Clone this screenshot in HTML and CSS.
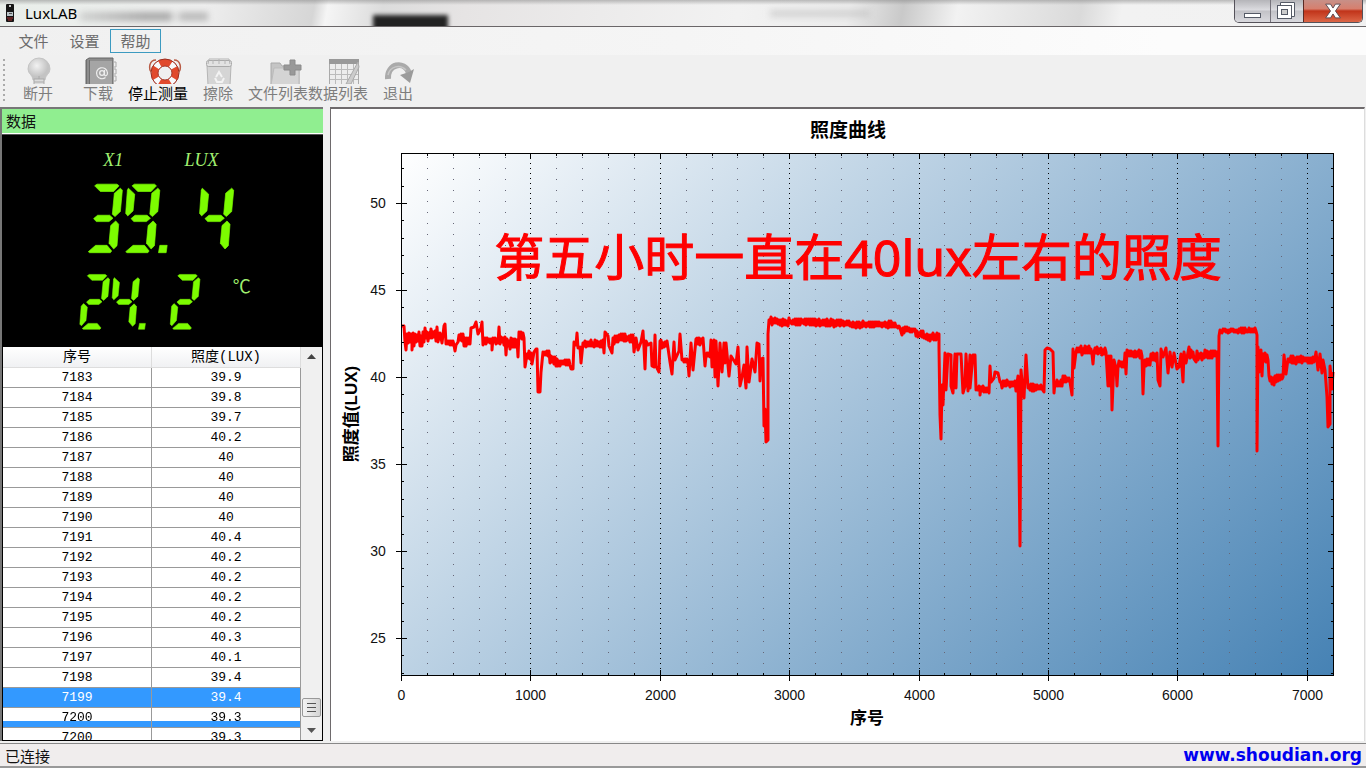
FILE: index.html
```html
<!DOCTYPE html>
<html lang="zh-CN">
<head>
<meta charset="utf-8">
<title>LuxLAB</title>
<link rel="stylesheet" href="styles.css">
</head>
<body>
<header class="titlebar">
  <svg class="app-icon" viewBox="0 0 10 20" aria-hidden="true">
    <rect x="1" y="1" width="8" height="18" rx="1" fill="#161616"/><rect x="4" y="2" width="2" height="2" fill="#c8c8c8"/>
    <rect x="2" y="9" width="6" height="4" fill="#b9c4c8"/><rect x="4" y="10" width="3" height="1" fill="#555"/><path d="M2 15h6M3 17h4" stroke="#a33" stroke-width="1"/>
  </svg>
  <h1 class="app-name">LuxLAB</h1>
  <div class="glass-blot glass-text"></div>
  <div class="glass-blot glass-dark"></div>
  <div class="glass-blot glass-grey"></div>
  <div class="window-buttons">
    <button class="win-btn win-min" aria-label="最小化"><svg viewBox="0 0 35 22"><rect x="9.500" y="13.500" width="16" height="4" fill="#fff" stroke="#555a66"/></svg></button>
    <button class="win-btn win-max" aria-label="还原"><svg viewBox="0 0 32 22"><path d="M9.500 5.500V2.500H23.500V16.500H20.500" fill="#fff" stroke="#555a66"/><rect x="6.500" y="5.500" width="14" height="13" fill="#fff" stroke="#555a66"/><rect x="10.500" y="9.500" width="6" height="5" fill="#ccc" stroke="#555a66"/></svg></button>
    <button class="win-btn win-close" aria-label="关闭"><svg viewBox="0 0 59 22"><path d="M22 4h5l2.500 4 2.500-4h5l-5 7 5 7h-5l-2.500-4-2.500 4h-5l5-7z" fill="#fff" stroke="#5c4a52"/></svg></button>
  </div>
</header>

<nav class="menubar">
  <button class="menu-item">文件</button>
  <button class="menu-item">设置</button>
  <button class="menu-item menu-active">帮助</button>
</nav>

<div class="toolbar" role="toolbar">
  <div class="grip"></div>
  <button class="tool" disabled>
    <svg viewBox="0 0 60 29"><defs><radialGradient id="bulb" cx=".4" cy=".35"><stop offset="0" stop-color="#f2f2f2"/><stop offset="1" stop-color="#c3c3c3"/></radialGradient></defs>
      <path d="M20 14a11 11 0 1 1 22 0c0 5-5 6-5 11H25c0-5-5-6-5-11z" fill="url(#bulb)" stroke="#c4c4c4"/><rect x="26" y="24" width="10" height="7" fill="#dcdcdc" stroke="#aaa"/><path d="M26 27h10M31 21v3" stroke="#aaa"/></svg>
    <span>断开</span></button>
  <button class="tool" disabled>
    <svg viewBox="0 0 60 29"><path d="M18 5l3-2h24v27H18z" fill="#8d8d8d" stroke="#666"/><path d="M22 6h22v24H22z" fill="#a5a5a5"/><path d="M18.500 5v25M21.500 5v25" stroke="#6f6f6f"/><path d="M46 7h2v5h-2M46 14h2v5h-2M46 21h2v5h-2" fill="none" stroke="#aaa"/><circle cx="34" cy="18" r="2.300" fill="none" stroke="#eee" stroke-width="1.300"/><path d="M36.500 15v4c0 3 3 2 3-1a5.500 5.500 0 1 0-2 4.500" fill="none" stroke="#eee" stroke-width="1.200"/></svg>
    <span>下载</span></button>
  <button class="tool">
    <svg viewBox="0 0 60 29"><circle cx="37" cy="18" r="10.500" fill="none" stroke="#e1492c" stroke-width="7"/><circle cx="37" cy="18" r="10.500" fill="none" stroke="#f7f9fb" stroke-width="7" stroke-dasharray="5 11.490" stroke-dashoffset="-5.700"/><circle cx="37" cy="18" r="14" fill="none" stroke="#9b2d20"/><circle cx="37" cy="18" r="7" fill="none" stroke="#a43a2b"/><path d="M28 5c-7 0-8 9-4 13M46 5c7 0 8 9 4 13" fill="none" stroke="#b85a44" stroke-width="1.500"/></svg>
    <span>停止测量</span></button>
  <button class="tool" disabled>
    <svg viewBox="0 0 60 29"><path d="M19 11h24l-1 19H20z" fill="#d5d5d5" stroke="#b5b5b5"/><rect x="18.500" y="5.500" width="25" height="6" rx="2" fill="#e2e2e2" stroke="#aaa"/><path d="M20 9l1-5h20l1 5M25 5v4M31 4v5M37 5v4" fill="none" stroke="#b4b4b4"/><path d="M28 22l3-5 3 5M27 23l2 4h5l2-4" fill="none" stroke="#f3f3f3" stroke-width="2"/></svg>
    <span>擦除</span></button>
  <button class="tool" disabled>
    <svg viewBox="0 0 60 29"><path d="M23 8h9l2 3h17v19H23z" fill="#c5c5c5" stroke="#aaa"/><path d="M26 13h25v17H23z" fill="#d4d4d4" stroke="#bbb"/><path d="M42 5h5v5h6v5h-6v5h-5v-5h-6v-5h6z" fill="#999" stroke="#8b8b8b"/></svg>
    <span>文件列表</span></button>
  <button class="tool" disabled>
    <svg viewBox="0 0 60 29"><rect x="21.500" y="4.500" width="29" height="26" fill="#ededed" stroke="#aaa"/><path d="M21 4h30v5H21z" fill="#999"/><path d="M22 14.500h28M22 19.500h28M22 24.500h28M27.500 9v20M33.500 9v20M39.500 9v20M45.500 9v20" stroke="#bbb"/><path d="M50 7L38 29h5L51 12z" fill="#ccc" stroke="#aaa"/></svg>
    <span>数据列表</span></button>
  <button class="tool" disabled>
    <svg viewBox="0 0 60 29"><path d="M20 24C19 9 36 5 41 18" fill="none" stroke="#aaa" stroke-width="6"/><path d="M32 20l10 8 4-14-5 3z" fill="#9b9b9b"/><path d="M20 20C22 11 32 9 38 15" fill="none" stroke="#c6c6c6" stroke-width="1.500"/></svg>
    <span>退出</span></button>
</div>

<main class="workspace">
  <aside class="side">
    <h2 class="side-title">数据</h2>
    <svg class="meter" viewBox="3 135 320 210" role="img" aria-label="39.4 LUX, 24.2 ℃">
      <defs>
        <path id="seg-a" d="M19 5l7-5h60l6 5-16 17H36z"/>
        <path id="seg-b" d="M96 12l6 6-6 64-16 15-8-7 6-63z"/>
        <path id="seg-c" d="M82 110l9 10-5 64-10 10-14-17 5-53z"/>
        <path id="seg-d" d="M0 202l22-19h34l14 17-4 5H4z"/>
        <path id="seg-e" d="M5 109l14 13-5 50-17 20-6-6 5-67z"/>
        <path id="seg-f" d="M8 12l19 18-5 50L6 95l-6-8 5-69z"/>
        <path id="seg-g" d="M16 103l12-10h36l10 9-12 10H24z"/>
        <path id="seg-dot" d="M102 183h22l-3 22H98z"/>
      </defs>
      <text class="meter-unit meter-italic" x="104" y="166">X1</text>
      <text class="meter-unit meter-italic" x="185" y="166">LUX</text>
      <text class="meter-unit" x="233" y="293">℃</text>
      <g fill="#7cfc00" stroke="#7cfc00" stroke-width="2">
        <g transform="translate(89 184) scale(.3333)">
          <g><use href="#seg-a"/><use href="#seg-b"/><use href="#seg-c"/><use href="#seg-d"/><use href="#seg-g"/></g>
          <g transform="translate(112)"><use href="#seg-a"/><use href="#seg-b"/><use href="#seg-c"/><use href="#seg-d"/><use href="#seg-f"/><use href="#seg-g"/><use href="#seg-dot"/></g>
          <g transform="translate(333)"><use href="#seg-b"/><use href="#seg-c"/><use href="#seg-f"/><use href="#seg-g"/></g>
        </g>
        <g transform="translate(83 274) scale(.2667)">
          <g><use href="#seg-a"/><use href="#seg-b"/><use href="#seg-g"/><use href="#seg-e"/><use href="#seg-d"/></g>
          <g transform="translate(112)"><use href="#seg-b"/><use href="#seg-c"/><use href="#seg-f"/><use href="#seg-g"/><use href="#seg-dot"/></g>
          <g transform="translate(338)"><use href="#seg-a"/><use href="#seg-b"/><use href="#seg-g"/><use href="#seg-e"/><use href="#seg-d"/></g>
        </g>
      </g>
    </svg>
    <div class="grid-box">
      <div class="grid-view">
        <table class="grid">
          <thead><tr><th scope="col">序号</th><th scope="col">照度(LUX)</th></tr></thead>
          <tbody>
            <tr><td>7183</td><td>39.9</td></tr>
            <tr><td>7184</td><td>39.8</td></tr>
            <tr><td>7185</td><td>39.7</td></tr>
            <tr><td>7186</td><td>40.2</td></tr>
            <tr><td>7187</td><td>40</td></tr>
            <tr><td>7188</td><td>40</td></tr>
            <tr><td>7189</td><td>40</td></tr>
            <tr><td>7190</td><td>40</td></tr>
            <tr><td>7191</td><td>40.4</td></tr>
            <tr><td>7192</td><td>40.2</td></tr>
            <tr><td>7193</td><td>40.2</td></tr>
            <tr><td>7194</td><td>40.2</td></tr>
            <tr><td>7195</td><td>40.2</td></tr>
            <tr><td>7196</td><td>40.3</td></tr>
            <tr><td>7197</td><td>40.1</td></tr>
            <tr><td>7198</td><td>39.4</td></tr>
            <tr class="row-selected"><td>7199</td><td>39.4</td></tr>
            <tr class="row-partial"><td><span>7200</span></td><td><span>39.3</span></td></tr>
            <tr><td>7200</td><td>39.3</td></tr>
          </tbody>
        </table>
      </div>
      <div class="scrollbar">
        <button class="scroll-btn" aria-label="向上滚动"><svg viewBox="0 0 9 5"><path d="M0 5l4.500-5L9 5z" fill="#444"/></svg></button>
        <div class="scroll-track"><div class="scroll-thumb"></div></div>
        <button class="scroll-btn" aria-label="向下滚动"><svg viewBox="0 0 9 5"><path d="M0 0l4.500 5L9 0z" fill="#555"/></svg></button>
      </div>
    </div>
  </aside>

  <section class="chart-panel">
    <svg class="chart" viewBox="331 109 1033 632" role="img" aria-label="照度曲线">
      <defs><linearGradient id="plot-fill" gradientUnits="userSpaceOnUse" x1="401" y1="153" x2="1128" y2="880"><stop offset="0" stop-color="#fff"/><stop offset="1" stop-color="#4682b4"/></linearGradient></defs>
      <text class="chart-title" x="848" y="137">照度曲线</text>
      <rect x="401.500" y="153.500" width="932" height="522" fill="url(#plot-fill)"/>
      <path id="grid-minor" class="grid-minor"/>
      <path id="grid-major" class="grid-major"/>
      <path id="trace" class="trace"/>
      <path id="ticks" class="ticks"/>
      <rect x="401.500" y="153.500" width="932" height="522" class="frame"/>
      <g id="labels" class="axis-label"></g>
      <text class="axis-title" x="867" y="724">序号</text>
      <text class="axis-title" transform="translate(357 414) rotate(-90)">照度值(LUX)</text>
      <text class="note" x="858" y="276">第五小时一直在40lux左右的照度</text>
    </svg>
  </section>
</main>

<footer class="statusbar">
  <span>已连接</span>
  <a class="site" href="#">www.shoudian.org</a>
</footer>
<script src="chart.js"></script>
</body>
</html>
```
FILE: styles.css
```css
* { box-sizing: border-box; }
body {
  margin: 0;
  height: 100vh;
  display: flex;
  flex-direction: column;
  overflow: hidden;
  background: #f0f0f0;
  color: #111;
  font: 15px/20px "Noto Sans", "Noto Sans CJK SC", sans-serif;
}
button { margin: 0; padding: 0; border: 0; background: none; font: inherit; color: inherit; }
h1, h2 { margin: 0; font: inherit; }
svg { display: block; }

.titlebar {
  position: relative;
  flex: none;
  display: flex;
  align-items: center;
  gap: 10px;
  height: 27px;
  padding-left: 5px;
  overflow: hidden;
  border-bottom: 1px solid #6a6668;
  background:
    linear-gradient(#8888, #8880 5px),
    linear-gradient(100deg, #e9eeea 0, #eee 15%, #d6d6d6 23%, #f5f5f5 24%, #dcdcdc 28%, #e6e4e4 34%, #f2f2f2 54%, #ececec 62%, #c9c9c9 66%, #f2f2f2 70%, #dadada 79%, #f2f2f2 82%, #f1f1f1 100%);
}
.app-icon { width: 10px; height: 20px; }
.app-name { position: relative; z-index: 1; font-size: 15px; color: #000; }
.glass-blot { position: absolute; filter: blur(3px); }
.glass-text { left: 80px; top: 12px; width: 128px; height: 9px; background: linear-gradient(90deg, #bbb8, #aaa 50%, #aaa 70%, #ccc0 74%, #bbb 80%); }
.glass-dark { left: 373px; top: 15px; width: 75px; height: 16px; background: #222; filter: blur(2px); }
.glass-grey { left: 770px; top: 10px; width: 100px; height: 7px; background: #bbb8; }
.window-buttons {
  align-self: flex-start;
  display: flex;
  height: 23px;
  margin: 0 3px 0 auto;
  border: 1px solid #55525a;
  border-top: 0;
  border-radius: 0 0 5px 5px;
  overflow: hidden;
}
.win-btn { background: linear-gradient(#b5b5b9 0, #dcdce0 45%, #c2c2c7 50%, #d9d9de); }
.win-btn svg { height: 22px; }
.win-min svg { width: 35px; }
.win-max { border-left: 1px solid #77747c; }
.win-max svg { width: 32px; }
.win-close { border-left: 1px solid #5b2a24; background: linear-gradient(#c79088 0, #d77f6e 40%, #c1341a 50%, #dc6647); }
.win-close svg { width: 58px; }

.menubar {
  flex: none;
  display: flex;
  align-items: center;
  height: 28px;
  padding-left: 8px;
  background: linear-gradient(90deg, #f0f0f0, #f5f5f5 50%, #fcfcfc 85%);
  color: #6c6c6c;
}
.menu-item { width: 51px; height: 24px; border: 1px solid transparent; }
.menu-active { border-color: #3c9ac0; }

.toolbar { flex: none; display: flex; height: 52px; }
.grip { width: 2px; height: 44px; margin: 4px 3px; background: repeating-linear-gradient(#aaa 0 2px, #0000 2px 5px); }
.tool { flex: none; width: 60px; display: flex; flex-direction: column; align-items: center; color: #7d7d7d; white-space: nowrap; }
.tool:enabled { color: #000; }
.tool svg { width: 60px; height: 29px; }
.tool span { line-height: 18px; }

.workspace { flex: 1; min-height: 0; display: grid; grid-template-columns: 323px 1fr; gap: 7px; padding-right: 1px; }
.side { min-height: 0; display: flex; flex-direction: column; border: solid #777; border-width: 2px 0 0 2px; }
.side-title { flex: none; height: 25px; padding: 2px 4px 0; background: #90ee90; border-bottom: 1px solid #fff; }
.meter { flex: none; width: 100%; background: #000; border-top: 1px solid #555; }
.meter-unit { font: 18px "Liberation Serif", "Noto Sans CJK SC", serif; fill: #a0f070; }
.meter-italic { font-style: italic; }

.grid-box { flex: 1; min-height: 0; display: flex; border: 1px solid #000; background: #fff; }
.grid-view { flex: 1; overflow: hidden; }
.grid { width: 100%; table-layout: fixed; border-collapse: separate; border-spacing: 0; font: 13px/19px "Liberation Mono", "Noto Sans CJK SC", monospace; color: #000; text-align: center; }
.grid th { height: 20px; padding: 1px 0 0; font-weight: normal; font-size: 14px; line-height: 19px; background: linear-gradient(#fff, #f0f1f3); border: solid #ddd; border-width: 0 1px 1px 0; }
.grid td { height: 20px; padding: 0; border: solid #999; border-width: 0 1px 1px 0; }
.row-selected td { background: #3399ff; color: #fff; }
.row-partial td { background: linear-gradient(#fff 13px, #3399ff 13px); }
.row-partial span { display: block; background: linear-gradient(#000 13px, #fff 13px); background-clip: text; color: transparent; }
.scrollbar { flex: none; width: 21px; display: flex; flex-direction: column; background: #f0f0f0; }
.scroll-btn { flex: none; height: 20px; display: flex; align-items: center; justify-content: center; }
.scroll-btn svg { width: 9px; height: 5px; }
.scroll-track { flex: 1; display: flex; flex-direction: column; justify-content: flex-end; padding: 0 1px 3px; }
.scroll-thumb {
  height: 19px;
  border: 1px solid #999;
  border-radius: 2px;
  background: repeating-linear-gradient(#555 0 1px, #0000 1px 4px) center / 9px 9px no-repeat, linear-gradient(90deg, #f4f4f4, #d4d4d4);
}

.chart-panel { min-width: 0; min-height: 0; background: #fff; border: solid #6e6a6c; border-width: 2px 1px 0 1px; border-right-color: #ddd; }
.chart { width: 100%; height: 100%; }
.chart text { text-anchor: middle; font-family: "Liberation Sans", "Noto Sans CJK SC", sans-serif; }
.chart-title { font-size: 19px; font-weight: bold; }
.axis-title { font-size: 17px; font-weight: bold; }
.axis-label { font-size: 14px; fill: #111; }
.chart .note { font-family: "Noto Sans", "Noto Sans CJK SC", sans-serif; font-size: 50px; fill: #f00; stroke: #f00; stroke-width: 1; }
.grid-minor { stroke: #667; stroke-dasharray: 1 10; }
.grid-major { stroke: #000; stroke-dasharray: 1 4; }
.ticks, .frame { fill: none; stroke: #000; }
.trace { fill: none; stroke: #fe0000; stroke-width: 3; stroke-linejoin: round; }

.statusbar {
  flex: none;
  display: flex;
  justify-content: space-between;
  height: 25px;
  margin-top: 2px;
  padding: 2px 4px 0 5px;
  background: #f0eded;
  border-top: 1px solid #888;
  border-bottom: 2px solid #999;
}
.site { font: bold 17px/18px "DejaVu Sans", sans-serif; color: #0000f0; text-decoration: none; }
```
FILE: chart.js
```js
const LEFT = 401, RIGHT = 1333, TOP = 153, BOTTOM = 675;

// [x, y] is a point; [x0, x1, high, low] is a run of jitter between two levels.
const readings = [
  [401,326],[404,326],[405,342],[406,350],[407,334],[408,422,331,346],[412,350],[413,333],[423,436,328,342],[437,327],[438,342],
  [440,333],[442,343],[444,326],[445,324],[446,344],[447,454,340,346],[455,351],[456,345],[458,463,333,342],[464,470,338,346],
  [471,328],[474,327],[476,322],[478,334],[481,328],[482,322],[483,345],[484,498,337,344],[492,350],[493,340],[499,327],[500,344],
  [501,505,336,345],[506,355],[507,517,337,349],[518,357],[519,332],[520,524,332,340],[525,367],[526,531,351,361],[532,364],[534,352],
  [536,349],[537,349],[538,392],[540,392],[541,372],[543,352],[544,549,351,356],[550,555,356,364],[556,570,359,366],[571,369],[573,369],
  [574,342],[576,345],[577,333],[578,348],[580,347],[581,363],[583,343],[584,603,340,348],[604,353],[605,332],[608,336],[609,346],
  [612,353],[613,615,335,345],[616,633,334,343],[634,352],[636,338],[638,350],[641,342],[643,331],[644,348],[645,369],[646,341],[648,345],
  [651,343],[652,366],[654,367],[655,335],[656,366],[659,372],[660,341],[661,668,340,348],[670,362],[672,374],[674,342],[675,360],
  [679,351],[680,334],[682,360],[683,688,358,363],[689,376],[691,343],[693,370],[696,339],[697,703,338,345],[705,366],[706,710,352,358],
  [711,340],[712,367],[713,352],[714,340],[715,377],[716,341],[717,362],[718,386],[720,343],[722,372],[724,343],[725,363],[726,343],[729,376],[731,356],
  [736,364],[738,347],[740,386],[742,377],[744,365],[746,388],[747,347],[749,382],[752,359],[755,372],[757,343],[759,344],[760,381],
  [761,359],[763,358],[764,426],[765,409],[766,442],[768,440],[768,334],[769,320],[770,780,317,325],[781,820,318,326],[821,850,319,327],
  [851,896,321,328],[897,900,325,329],[902,335],[903,915,327,333],[916,924,331,338],[925,939,333,341],[939,348],[940,415],[941,439],
  [942,385],[943,405],[945,353],[946,390],[948,354],[951,355],[951,386],[953,393],[955,354],[956,388],[957,354],[961,354],[963,393],
  [965,386],[966,354],[968,391],[970,355],[970,388],[973,355],[975,355],[976,390],[977,988,386,392],[980,395],[989,393],[990,366],
  [991,382],[994,378],[995,372],[998,373],[1000,382],[1001,1015,380,388],[1016,391],[1018,376],[1020,546],[1021,370],[1023,392],
  [1024,398],[1026,355],[1028,388],[1029,1042,384,391],[1044,392],[1045,350],[1047,348],[1050,349],[1053,352],[1054,393],
  [1055,1062,380,387],[1063,1070,376,383],[1072,395],[1073,349],[1074,368],[1076,1092,346,355],[1093,364],[1094,1106,347,355],
  [1108,386],[1109,356],[1110,386],[1111,356],[1112,410],[1114,360],[1116,368],[1117,386],[1118,1124,360,368],[1125,353],[1126,374],
  [1127,1142,350,358],[1143,394],[1144,1150,358,368],[1151,1157,352,361],[1158,380],[1160,386],[1161,349],[1163,357],[1166,348],
  [1168,373],[1170,352],[1172,367],[1174,353],[1177,369],[1179,367],[1181,354],[1183,382],[1184,352],[1186,363],[1189,347],
  [1190,1194,348,360],[1196,362],[1197,1203,351,361],[1204,1217,350,359],[1218,446],[1219,336],[1220,330],[1222,1256,328,333],
  [1257,335],[1257,451],[1258,347],[1259,372],[1261,350],[1262,376],[1263,1268,352,362],[1269,376],[1270,1276,375,384],[1274,385],
  [1277,1283,374,382],[1284,355],[1286,374],[1288,359],[1289,1315,356,364],[1316,352],[1318,370],[1320,354],[1322,373],
  [1323,360],[1325,370],[1327,397],[1328,427],[1330,424],[1330,366],[1332,389],[1333,372]
];

function tracePath() {
  const pts = [];
  let seed = 7;
  for (const r of readings) {
    if (r.length === 2) { pts.push(r); continue; }
    const [x0, x1, high, low] = r;
    for (let x = x0; x <= x1; x++) {
      seed = (seed * 16807) % 2147483647;
      const wobble = (seed % 100) / 100 * (low - high) * 0.35;
      pts.push([x, Math.round(x % 2 ? high + wobble : low - wobble)]);
    }
  }
  pts.sort((a, b) => a[0] - b[0]);
  return 'M' + pts.map(p => p.join(' ')).join('L');
}

let minor = '', major = '', ticks = '', labels = '';
for (let v = 0; v <= 7200; v += 200) {
  const x = Math.round(LEFT + v * 0.1294) + 0.5;
  if (v % 1000 === 0) {
    if (v) major += `M${x} ${TOP}V${BOTTOM}`;
    ticks += `M${x} ${BOTTOM - 5}V${BOTTOM + 6}M${x} ${TOP}v6`;
    labels += `<text x="${x}" y="700">${v}</text>`;
  } else {
    minor += `M${x} ${TOP + 4}V${BOTTOM}`;
    ticks += `M${x} ${BOTTOM - 2}v2M${x} ${TOP}v3`;
  }
}
for (let v = 23; v <= 52; v++) {
  const y = Math.round(377 - (v - 40) * 17.4) + 0.5;
  if (v % 5 === 0) {
    ticks += `M${LEFT - 5} ${y}h11M${RIGHT - 5} ${y}h5`;
    labels += `<text x="378" y="${y + 4.5}">${v}</text>`;
  } else {
    ticks += `M${LEFT} ${y}h3M${RIGHT - 2} ${y}h2`;
  }
}
document.getElementById('grid-minor').setAttribute('d', minor);
document.getElementById('grid-major').setAttribute('d', major);
document.getElementById('ticks').setAttribute('d', ticks);
document.getElementById('labels').innerHTML = labels;
document.getElementById('trace').setAttribute('d', tracePath());
```
